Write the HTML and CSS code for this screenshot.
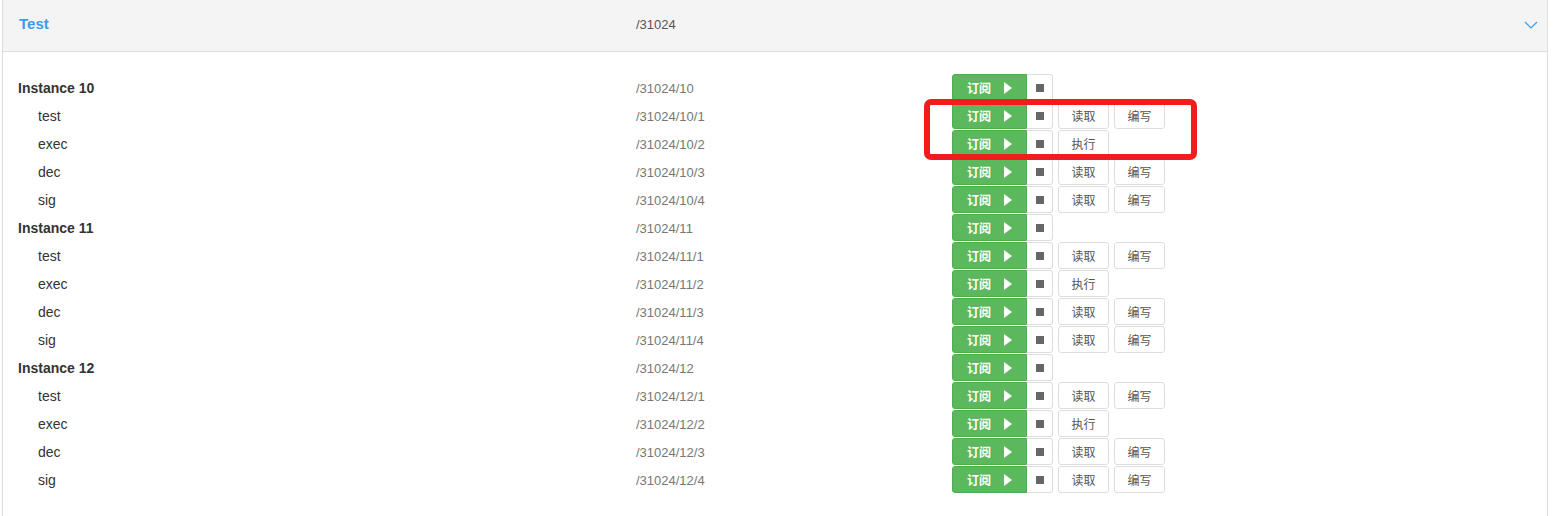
FILE: index.html
```html
<!DOCTYPE html>
<html>
<head>
    <meta charset="UTF-8" />
    <title>Test</title>
    <link rel="stylesheet" href="styles.css">
</head>
<body>
    <div class="panel">
        <div class="panel-heading">
            <span class="panel-title">Test</span>
            <span class="panel-path">/31024</span>
            <svg class="chevron" width="14" height="8" viewBox="0 0 14 8"><path d="M1 1 L7 7 L13 1" fill="none" stroke="#3d9be9" stroke-width="1.2"/></svg>
        </div>
        <div class="panel-body" id="list"></div>
    </div>
    <div class="mark"></div>

    <script>
        const list = document.getElementById("list");
        const children = [
            ["test", 1, ["读取", "编写"]],
            ["exec", 2, ["执行"]],
            ["dec", 3, ["读取", "编写"]],
            ["sig", 4, ["读取", "编写"]]
        ];

        function makeRow(name, path, extra, isInstance) {
            const row = document.createElement("div");
            row.className = isInstance ? "row instance" : "row";
            let html = '<span class="name">' + name + '</span>' +
                '<span class="path">' + path + '</span>' +
                '<div class="actions"><div class="group">' +
                '<span class="btn-sub">订阅<i class="play"></i></span>' +
                '<span class="btn-stop"><i class="square"></i></span></div>';
            extra.forEach(function(label) {
                html += '<span class="btn">' + label + '</span>';
            });
            html += '</div>';
            row.innerHTML = html;
            list.appendChild(row);
        }

        [10, 11, 12].forEach(function(n) {
            makeRow("Instance " + n, "/31024/" + n, [], true);
            children.forEach(function(c) {
                makeRow(c[0], "/31024/" + n + "/" + c[1], c[2], false);
            });
        });
    </script>
</body>
</html>
```

FILE: styles.css
```css
body {
    margin: 0;
    font-family: "Liberation Sans", Arial, "Noto Sans CJK SC", sans-serif;
    color: #333;
    background: #fff;
}

.panel {
    margin: 0 6px 0 2px;
    border: 1px solid #ddd;
    border-top: none;
    height: 530px;
    box-sizing: border-box;
}

.panel-heading {
    display: flex;
    align-items: center;
    height: 51px;
    background: #f4f4f4;
    border-bottom: 1px solid #ddd;
    padding: 0 9px 0 16px;
}

.panel-title {
    width: 617px;
    font-size: 15px;
    font-weight: bold;
    color: #3d9be9;
    margin-top: -4px;
}

.panel-path {
    flex: 1;
    font-size: 13px;
    color: #555;
    margin-top: -3px;
}

.chevron {
    margin-top: -2px;
}

.panel-body {
    padding: 22px 15px 0;
}

.row {
    display: flex;
    align-items: center;
    height: 27px;
    margin-bottom: 1px;
}

.name {
    width: 618px;
    box-sizing: border-box;
    padding-left: 20px;
    font-size: 14px;
    color: #333;
}

.instance .name {
    padding-left: 0;
    font-weight: bold;
}

.path {
    width: 316px;
    font-size: 13px;
    color: #777;
    padding-top: 1px;
}

.actions {
    display: flex;
    gap: 5px;
    height: 27px;
}

.group {
    display: flex;
}

.btn-sub {
    display: flex;
    align-items: center;
    width: 75px;
    box-sizing: border-box;
    padding-left: 14px;
    background: #5cb85c;
    border: 1px solid #4cae4c;
    border-radius: 3px 0 0 3px;
    color: #fff;
    font-size: 12px;
    font-weight: bold;
    font-family: "Noto Sans CJK SC", sans-serif;
}

.play {
    width: 0;
    height: 0;
    margin-left: 13px;
    border-top: 6px solid transparent;
    border-bottom: 6px solid transparent;
    border-left: 8px solid #fff;
}

.btn-stop {
    display: flex;
    align-items: center;
    justify-content: center;
    width: 26px;
    box-sizing: border-box;
    border: 1px solid #ddd;
    border-left: none;
    border-radius: 0 3px 3px 0;
    background: #fff;
}

.square {
    width: 8px;
    height: 8px;
    background: #666;
}

.btn {
    display: flex;
    align-items: center;
    justify-content: center;
    width: 51px;
    box-sizing: border-box;
    border: 1px solid #ddd;
    border-radius: 3px;
    background: #fff;
    color: #555;
    font-size: 12px;
    font-family: "Noto Sans CJK SC", sans-serif;
}

.mark {
    position: absolute;
    left: 924px;
    top: 99px;
    width: 273px;
    height: 61px;
    box-sizing: border-box;
    border: 6px solid #f21c1c;
    border-radius: 7px;
}
```
